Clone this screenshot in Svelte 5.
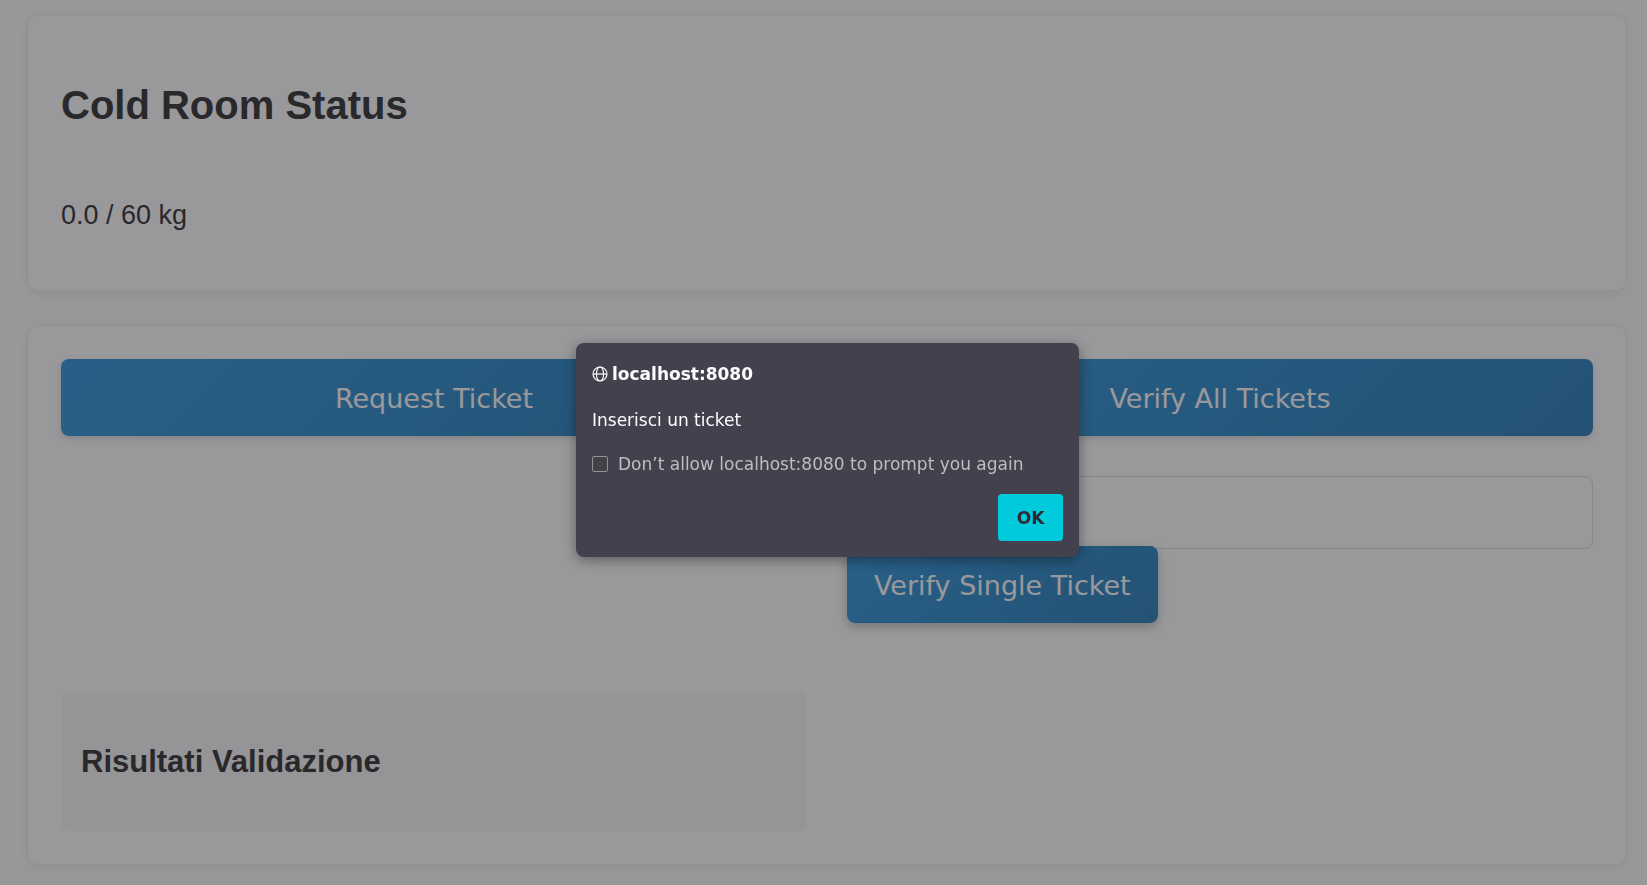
<script lang="ts">
  let stored = $state(0);
  let capacity = $state(60);
  let ticket = $state('');
  let mute = $state(false);
  let open = $state(true);

  function ask() {
    if (!mute && !ticket) open = true;
  }
</script>

<main>
  <section class="card status">
    <h1>Cold Room Status</h1>
    <p>{stored.toFixed(1)} / {capacity} kg</p>
  </section>

  <section class="card actions">
    <button class="primary" type="button">Request Ticket</button>
    <button class="primary" type="button">Verify All Tickets</button>
    <div class="single">
      <input type="text" aria-label="Ticket" bind:value={ticket} />
      <button class="primary" type="button" onclick={ask}>Verify Single Ticket</button>
    </div>
    <div class="results">
      <h2>Risultati Validazione</h2>
    </div>
  </section>
</main>

{#if open}
  <div class="backdrop">
    <dialog open aria-labelledby="origin">
      <header>
        <svg viewBox="0 0 16 16" width="16" height="16" aria-hidden="true">
          <circle cx="8" cy="8" r="7" />
          <ellipse cx="8" cy="8" rx="3.6" ry="7" />
          <path d="M1 8h14" />
        </svg>
        <strong id="origin">localhost:8080</strong>
      </header>
      <p>Inserisci un ticket</p>
      <label>
        <input type="checkbox" bind:checked={mute} />
        <span>Don’t allow localhost:8080 to prompt you again</span>
      </label>
      <footer>
        <button type="button" onclick={() => (open = false)}>OK</button>
      </footer>
    </dialog>
  </div>
{/if}

<style>
  :global(body) {
    background: #fefefe;
  }

  main {
    display: flex;
    flex-direction: column;
    gap: 34px;
    padding: 15px 20px 20px 27px;
    color: #333;
    font: 27px/31px "Liberation Sans", Arial, sans-serif;
  }

  .card {
    padding: 33px;
    border: 1px solid #f0f0f0;
    border-radius: 11px;
    background: #fff;
    box-shadow: 0 3px 13px rgba(0, 0, 0, 0.07);
  }

  .status {
    display: flex;
    flex-direction: column;
  }

  h1 {
    margin: 33px 0;
    font-size: 40px;
    line-height: 46px;
  }

  .status p {
    margin: 39px 0 26px;
  }

  .actions {
    display: grid;
    grid-template-columns: 1fr 1fr;
    gap: 40px;
  }

  .primary {
    padding: 24px 27px 22px;
    border: 0;
    border-radius: 8px;
    background: linear-gradient(135deg, #3498db, #2980b9);
    box-shadow: 0 3px 7px rgba(0, 0, 0, 0.15);
    color: #fff;
    font: 27px/31px "DejaVu Sans", sans-serif;
    cursor: pointer;
  }

  .single {
    grid-column: 2;
    display: flex;
    flex-direction: column;
    align-items: flex-start;
    padding-bottom: 29px;
  }

  .single input {
    box-sizing: border-box;
    width: 100%;
    padding: 20px;
    border: 1px solid #ddd;
    border-radius: 8px;
    background: #fff;
    color: inherit;
    font: 27px/31px "DejaVu Sans", sans-serif;
  }

  .single .primary {
    position: relative;
    margin-top: -3px;
    box-shadow: 0 4px 11px rgba(0, 0, 0, 0.25);
  }

  .results {
    padding: 20px;
    border-radius: 8px;
    background: #f8f8f8;
  }

  h2 {
    margin: 31px 0;
    font-size: 31px;
    line-height: 37px;
  }

  .backdrop {
    position: fixed;
    inset: 0;
    display: flex;
    align-items: center;
    justify-content: center;
    padding: 15px 0 0 8px;
    background: rgba(28, 27, 34, 0.45);
  }

  dialog {
    position: static;
    display: flex;
    flex-direction: column;
    box-sizing: border-box;
    width: 503px;
    max-width: 100%;
    margin: 0;
    padding: 20px 16px 16px;
    border: 0;
    border-radius: 8px;
    background: #42414d;
    box-shadow: 0 3px 13px rgba(0, 0, 0, 0.4);
    color: #fbfbfe;
    font: 17px/22px "DejaVu Sans", sans-serif;
  }

  header {
    display: flex;
    align-items: center;
    gap: 4px;
  }

  svg {
    fill: none;
    stroke: #fbfbfe;
    stroke-width: 1.2;
  }

  dialog p {
    margin: 24px 0 22px;
  }

  label {
    display: flex;
    align-items: center;
    gap: 10px;
    color: #bebec0;
  }

  label input {
    appearance: none;
    box-sizing: border-box;
    width: 16px;
    height: 16px;
    margin: 0;
    border: 1px solid #8f8f9d;
    border-radius: 2px;
    background: #424242;
  }

  label input:checked {
    background: #00ddff;
  }

  footer {
    display: flex;
    justify-content: flex-end;
    margin-top: 19px;
  }

  footer button {
    min-width: 65px;
    padding: 13px 16px 12px;
    border: 0;
    border-radius: 4px;
    background: #00cadb;
    color: #2b2a33;
    font: bold 17px/22px "DejaVu Sans", sans-serif;
  }
</style>
